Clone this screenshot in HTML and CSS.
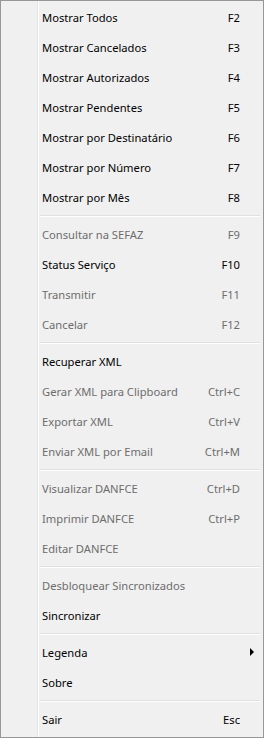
FILE: index.html
```html
<!DOCTYPE html>
<html lang="pt">
  <head>
    <meta charset="UTF-8" />
    <title>Menu</title>
    <link rel="stylesheet" href="styles.css">
  </head>
  <body>
    <div class="menu">
      <div class="item"><span class="label">Mostrar Todos</span><span class="key">F2</span></div>
      <div class="item"><span class="label">Mostrar Cancelados</span><span class="key">F3</span></div>
      <div class="item"><span class="label">Mostrar Autorizados</span><span class="key">F4</span></div>
      <div class="item"><span class="label">Mostrar Pendentes</span><span class="key">F5</span></div>
      <div class="item"><span class="label">Mostrar por Destinatário</span><span class="key">F6</span></div>
      <div class="item"><span class="label">Mostrar por Número</span><span class="key">F7</span></div>
      <div class="item"><span class="label">Mostrar por Mês</span><span class="key">F8</span></div>
      <div class="sep"></div>
      <div class="item disabled"><span class="label">Consultar na SEFAZ</span><span class="key">F9</span></div>
      <div class="item"><span class="label">Status Serviço</span><span class="key">F10</span></div>
      <div class="item disabled"><span class="label">Transmitir</span><span class="key">F11</span></div>
      <div class="item disabled"><span class="label">Cancelar</span><span class="key">F12</span></div>
      <div class="sep"></div>
      <div class="item"><span class="label">Recuperar XML</span></div>
      <div class="item disabled"><span class="label">Gerar XML para Clipboard</span><span class="key">Ctrl+C</span></div>
      <div class="item disabled"><span class="label">Exportar XML</span><span class="key">Ctrl+V</span></div>
      <div class="item disabled"><span class="label">Enviar XML por Email</span><span class="key">Ctrl+M</span></div>
      <div class="sep"></div>
      <div class="item disabled"><span class="label">Visualizar DANFCE</span><span class="key">Ctrl+D</span></div>
      <div class="item disabled"><span class="label">Imprimir DANFCE</span><span class="key">Ctrl+P</span></div>
      <div class="item disabled"><span class="label">Editar DANFCE</span></div>
      <div class="sep"></div>
      <div class="item disabled"><span class="label">Desbloquear Sincronizados</span></div>
      <div class="item"><span class="label">Sincronizar</span></div>
      <div class="sep"></div>
      <div class="item"><span class="label">Legenda</span><span class="arrow"></span></div>
      <div class="item"><span class="label">Sobre</span></div>
      <div class="sep"></div>
      <div class="item"><span class="label">Sair</span><span class="key">Esc</span></div>
    </div>
  </body>
</html>
```

FILE: styles.css
```css
body {
  margin: 0;
  font-family: "Noto Sans", "Segoe UI", sans-serif;
  font-size: 11.2px;
  color: #000;
}

.menu {
  box-sizing: border-box;
  width: 264px;
  height: 738px;
  border: 1px solid #979797;
  padding: 1px 0 3px;
  background: linear-gradient(
    to right,
    #f0f0f0 36px,
    #e2e3e3 36px 37px,
    #ffffff 37px 38px,
    #f0f0f0 38px
  );
}

.item {
  height: 30px;
  display: flex;
  align-items: center;
  padding: 1px 9px 0 41px;
  box-sizing: border-box;
}

.label {
  flex: 1;
}

.key {
  margin-right: 14px;
}

.disabled {
  color: #6d6d6d;
}

.arrow {
  width: 0;
  height: 0;
  border-top: 4px solid transparent;
  border-bottom: 4px solid transparent;
  border-left: 4px solid #000;
  margin-top: -1px;
}

.sep {
  height: 7px;
  box-sizing: border-box;
  padding-top: 3px;
}

.sep::before {
  content: "";
  display: block;
  margin: 0 3px 0 39px;
  border-top: 1px solid #e0e0e0;
  border-bottom: 1px solid #ffffff;
}
```
